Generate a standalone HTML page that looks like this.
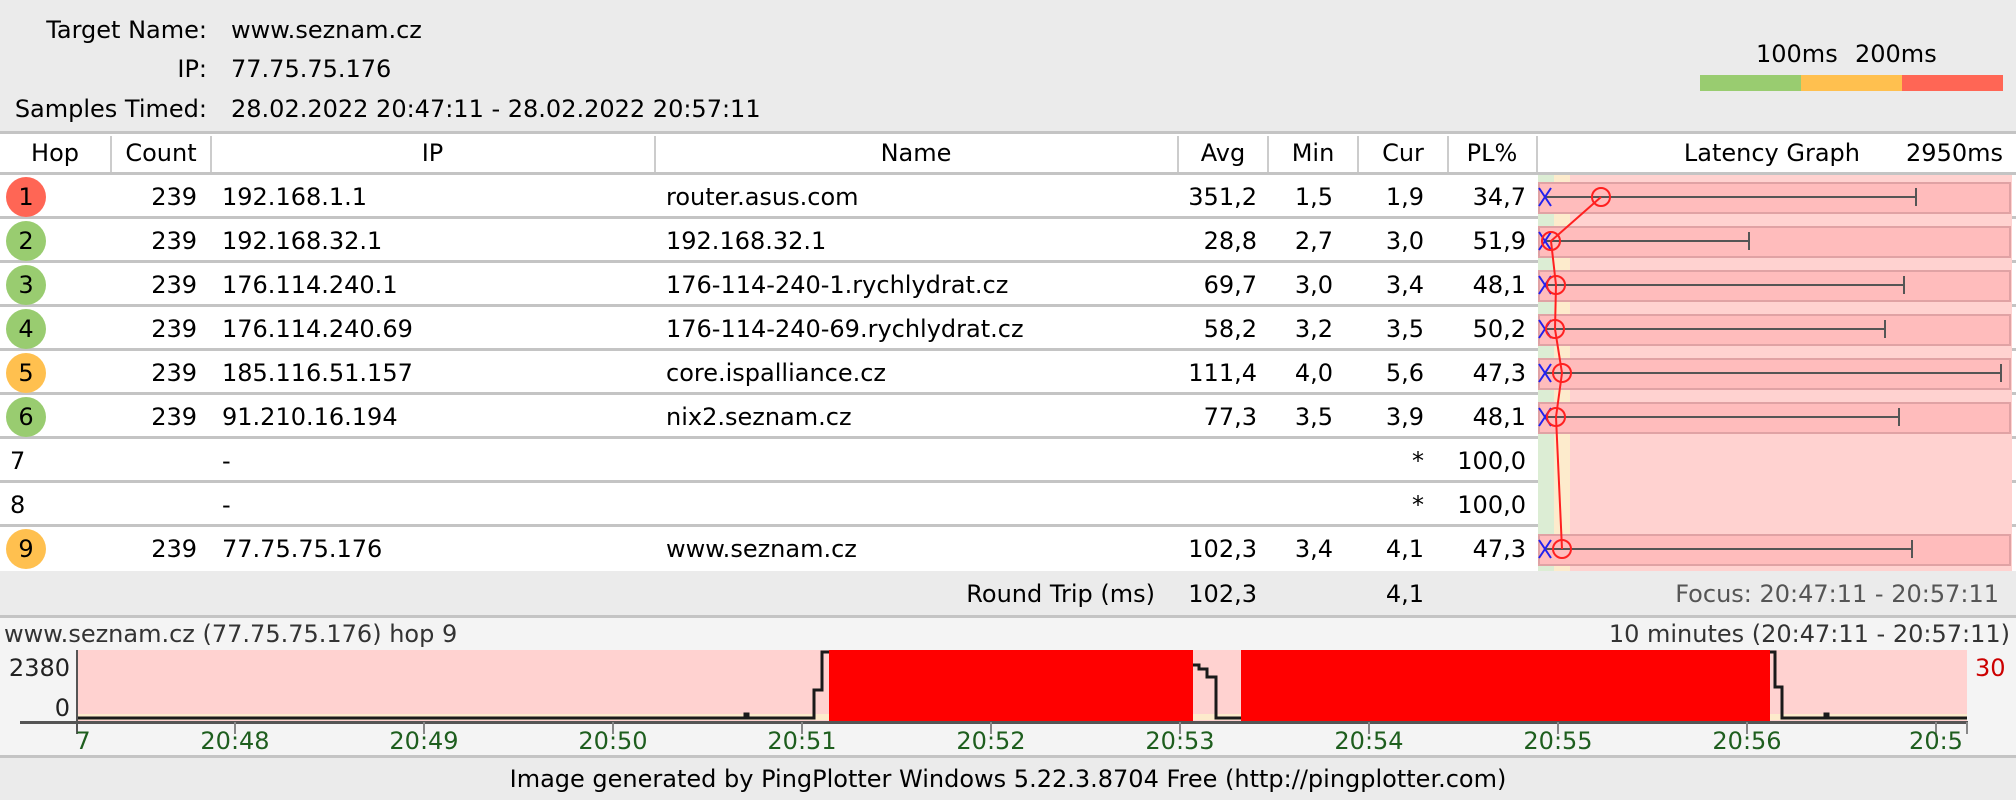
<!DOCTYPE html>
<html><head><meta charset="utf-8"><style>
*{margin:0;padding:0;box-sizing:border-box}
body{width:2016px;height:800px;overflow:hidden;background:#fff;font-family:"DejaVu Sans",sans-serif;font-size:24px;color:#000;position:relative}
.a{position:absolute;white-space:nowrap;line-height:30px}
.r{text-align:right}
.c{text-align:center}
</style></head><body>
<div style="position:absolute;left:0;top:0;width:2016px;height:132px;background:#ebebeb"></div>
<div class="a r" style="right:1809px;top:15px">Target Name:</div>
<div class="a" style="left:231px;top:15px">www.seznam.cz</div>
<div class="a r" style="right:1809px;top:54px">IP:</div>
<div class="a" style="left:231px;top:54px">77.75.75.176</div>
<div class="a r" style="right:1809px;top:94px">Samples Timed:</div>
<div class="a" style="left:231px;top:94px">28.02.2022 20:47:11 - 28.02.2022 20:57:11</div>
<div class="a" style="left:1756px;top:39px">100ms</div>
<div class="a" style="left:1855px;top:39px">200ms</div>
<div style="position:absolute;left:1700px;top:75px;width:101px;height:16px;background:#99cc70"></div>
<div style="position:absolute;left:1801px;top:75px;width:101px;height:16px;background:#ffc04f"></div>
<div style="position:absolute;left:1902px;top:75px;width:101px;height:16px;background:#ff6655"></div>
<div style="position:absolute;left:0;top:131px;width:2016px;height:3px;background:#c4c4c4"></div>
<div class="a c" style="left:0;width:110px;top:138px">Hop</div>
<div class="a c" style="left:111px;width:100px;top:138px">Count</div>
<div class="a c" style="left:211px;width:443px;top:138px">IP</div>
<div class="a c" style="left:654px;width:524px;top:138px">Name</div>
<div class="a c" style="left:1178px;width:90px;top:138px">Avg</div>
<div class="a c" style="left:1268px;width:90px;top:138px">Min</div>
<div class="a c" style="left:1358px;width:90px;top:138px">Cur</div>
<div class="a c" style="left:1448px;width:88px;top:138px">PL%</div>
<div class="a r" style="right:156px;top:138px">Latency Graph</div>
<div class="a r" style="right:13px;top:138px">2950ms</div>
<div style="position:absolute;left:110px;top:136px;width:2px;height:36px;background:#ccc"></div>
<div style="position:absolute;left:210px;top:136px;width:2px;height:36px;background:#ccc"></div>
<div style="position:absolute;left:654px;top:136px;width:2px;height:36px;background:#ccc"></div>
<div style="position:absolute;left:1177px;top:136px;width:2px;height:36px;background:#ccc"></div>
<div style="position:absolute;left:1267px;top:136px;width:2px;height:36px;background:#ccc"></div>
<div style="position:absolute;left:1357px;top:136px;width:2px;height:36px;background:#ccc"></div>
<div style="position:absolute;left:1447px;top:136px;width:2px;height:36px;background:#ccc"></div>
<div style="position:absolute;left:1536px;top:136px;width:2px;height:36px;background:#ccc"></div>

<svg style="position:absolute;left:0;top:0" width="2016" height="800">
<rect x="1538" y="174" width="16" height="398" fill="#dcedd4"/>
<rect x="1554" y="174" width="16" height="398" fill="#fdebcc"/>
<rect x="1570" y="174" width="442" height="398" fill="#ffd2d0"/>
<g fill="#ffbcbc" stroke="#e0a2a4" stroke-width="2">
<rect x="1539" y="183" width="471" height="30"/>
<rect x="1539" y="227" width="471" height="30"/>
<rect x="1539" y="271" width="471" height="30"/>
<rect x="1539" y="315" width="471" height="30"/>
<rect x="1539" y="359" width="471" height="30"/>
<rect x="1539" y="403" width="471" height="30"/>
<rect x="1539" y="535" width="471" height="30"/>
</g>
<g stroke="#555" stroke-width="2">
<line x1="1545" y1="197" x2="1916" y2="197"/><line x1="1916" y1="188" x2="1916" y2="206"/>
<line x1="1545" y1="241" x2="1749" y2="241"/><line x1="1749" y1="232" x2="1749" y2="250"/>
<line x1="1545" y1="285" x2="1904" y2="285"/><line x1="1904" y1="276" x2="1904" y2="294"/>
<line x1="1545" y1="329" x2="1885" y2="329"/><line x1="1885" y1="320" x2="1885" y2="338"/>
<line x1="1545" y1="373" x2="2001" y2="373"/><line x1="2001" y1="364" x2="2001" y2="382"/>
<line x1="1545" y1="417" x2="1899" y2="417"/><line x1="1899" y1="408" x2="1899" y2="426"/>
<line x1="1545" y1="549" x2="1912" y2="549"/><line x1="1912" y1="540" x2="1912" y2="558"/>
</g>
<g stroke="#2222ee" stroke-width="2">
<path d="M1539 188l12 18M1551 188l-12 18 M1539 232l12 18M1551 232l-12 18 M1539 276l12 18M1551 276l-12 18 M1539 320l12 18M1551 320l-12 18 M1539 364l12 18M1551 364l-12 18 M1539 408l12 18M1551 408l-12 18 M1539 540l12 18M1551 540l-12 18"/>
</g>
<polyline points="1601,197 1551,241 1556,285 1555,329 1562,373 1556,417 1562,549" fill="none" stroke="#ff2020" stroke-width="2"/>
<g fill="none" stroke="#ff2020" stroke-width="2">
<circle cx="1601" cy="197" r="9"/><circle cx="1551" cy="241" r="9"/><circle cx="1556" cy="285" r="9"/><circle cx="1555" cy="329" r="9"/><circle cx="1562" cy="373" r="9"/><circle cx="1556" cy="417" r="9"/><circle cx="1562" cy="549" r="9"/>
</g>
<g fill="#c4c4c4">
<rect x="0" y="172" width="2016" height="3"/>
<rect x="0" y="216" width="1538" height="3"/><rect x="2012" y="216" width="4" height="3"/>
<rect x="0" y="260" width="1538" height="3"/><rect x="2012" y="260" width="4" height="3"/>
<rect x="0" y="304" width="1538" height="3"/><rect x="2012" y="304" width="4" height="3"/>
<rect x="0" y="348" width="1538" height="3"/><rect x="2012" y="348" width="4" height="3"/>
<rect x="0" y="392" width="1538" height="3"/><rect x="2012" y="392" width="4" height="3"/>
<rect x="0" y="436" width="1538" height="3"/><rect x="2012" y="436" width="4" height="3"/>
<rect x="0" y="480" width="1538" height="3"/><rect x="2012" y="480" width="4" height="3"/>
<rect x="0" y="524" width="1538" height="3"/><rect x="2012" y="524" width="4" height="3"/>
</g>
<circle cx="26" cy="197" r="20" fill="#ff6655"/>
<circle cx="26" cy="241" r="20" fill="#99cc70"/>
<circle cx="26" cy="285" r="20" fill="#99cc70"/>
<circle cx="26" cy="329" r="20" fill="#99cc70"/>
<circle cx="26" cy="373" r="20" fill="#ffc04f"/>
<circle cx="26" cy="417" r="20" fill="#99cc70"/>
<circle cx="26" cy="549" r="20" fill="#ffc04f"/>
</svg>

<div class="a c" style="left:0;width:52px;top:182px">1</div>
<div class="a c" style="left:0;width:52px;top:226px">2</div>
<div class="a c" style="left:0;width:52px;top:270px">3</div>
<div class="a c" style="left:0;width:52px;top:314px">4</div>
<div class="a c" style="left:0;width:52px;top:358px">5</div>
<div class="a c" style="left:0;width:52px;top:402px">6</div>
<div class="a" style="left:10px;top:446px">7</div>
<div class="a" style="left:10px;top:490px">8</div>
<div class="a c" style="left:0;width:52px;top:534px">9</div>

<div class="a r" style="right:1819px;top:182px">239</div>
<div class="a r" style="right:1819px;top:226px">239</div>
<div class="a r" style="right:1819px;top:270px">239</div>
<div class="a r" style="right:1819px;top:314px">239</div>
<div class="a r" style="right:1819px;top:358px">239</div>
<div class="a r" style="right:1819px;top:402px">239</div>
<div class="a r" style="right:1819px;top:534px">239</div>

<div class="a" style="left:222px;top:182px">192.168.1.1</div>
<div class="a" style="left:222px;top:226px">192.168.32.1</div>
<div class="a" style="left:222px;top:270px">176.114.240.1</div>
<div class="a" style="left:222px;top:314px">176.114.240.69</div>
<div class="a" style="left:222px;top:358px">185.116.51.157</div>
<div class="a" style="left:222px;top:402px">91.210.16.194</div>
<div class="a" style="left:222px;top:446px">-</div>
<div class="a" style="left:222px;top:490px">-</div>
<div class="a" style="left:222px;top:534px">77.75.75.176</div>

<div class="a" style="left:666px;top:182px">router.asus.com</div>
<div class="a" style="left:666px;top:226px">192.168.32.1</div>
<div class="a" style="left:666px;top:270px">176-114-240-1.rychlydrat.cz</div>
<div class="a" style="left:666px;top:314px">176-114-240-69.rychlydrat.cz</div>
<div class="a" style="left:666px;top:358px">core.ispalliance.cz</div>
<div class="a" style="left:666px;top:402px">nix2.seznam.cz</div>
<div class="a" style="left:666px;top:534px">www.seznam.cz</div>

<div class="a r" style="right:759px;top:182px">351,2</div>
<div class="a r" style="right:759px;top:226px">28,8</div>
<div class="a r" style="right:759px;top:270px">69,7</div>
<div class="a r" style="right:759px;top:314px">58,2</div>
<div class="a r" style="right:759px;top:358px">111,4</div>
<div class="a r" style="right:759px;top:402px">77,3</div>
<div class="a r" style="right:759px;top:534px">102,3</div>

<div class="a r" style="right:683px;top:182px">1,5</div>
<div class="a r" style="right:683px;top:226px">2,7</div>
<div class="a r" style="right:683px;top:270px">3,0</div>
<div class="a r" style="right:683px;top:314px">3,2</div>
<div class="a r" style="right:683px;top:358px">4,0</div>
<div class="a r" style="right:683px;top:402px">3,5</div>
<div class="a r" style="right:683px;top:534px">3,4</div>

<div class="a r" style="right:592px;top:182px">1,9</div>
<div class="a r" style="right:592px;top:226px">3,0</div>
<div class="a r" style="right:592px;top:270px">3,4</div>
<div class="a r" style="right:592px;top:314px">3,5</div>
<div class="a r" style="right:592px;top:358px">5,6</div>
<div class="a r" style="right:592px;top:402px">3,9</div>
<div class="a r" style="right:592px;top:446px">*</div>
<div class="a r" style="right:592px;top:490px">*</div>
<div class="a r" style="right:592px;top:534px">4,1</div>

<div class="a r" style="right:490px;top:182px">34,7</div>
<div class="a r" style="right:490px;top:226px">51,9</div>
<div class="a r" style="right:490px;top:270px">48,1</div>
<div class="a r" style="right:490px;top:314px">50,2</div>
<div class="a r" style="right:490px;top:358px">47,3</div>
<div class="a r" style="right:490px;top:402px">48,1</div>
<div class="a r" style="right:490px;top:446px">100,0</div>
<div class="a r" style="right:490px;top:490px">100,0</div>
<div class="a r" style="right:490px;top:534px">47,3</div>

<div style="position:absolute;left:0;top:571px;width:2016px;height:46px;background:#ebebeb"></div>
<div class="a r" style="right:861px;top:579px">Round Trip (ms)</div>
<div class="a r" style="right:759px;top:579px">102,3</div>
<div class="a r" style="right:592px;top:579px">4,1</div>
<div class="a r" style="right:17px;top:579px;color:#555">Focus: 20:47:11 - 20:57:11</div>
<div style="position:absolute;left:0;top:615px;width:2016px;height:3px;background:#c4c4c4"></div>

<div style="position:absolute;left:0;top:618px;width:2016px;height:138px;background:#f4f4f4"></div>
<div class="a" style="left:4px;top:619px;color:#333">www.seznam.cz (77.75.75.176) hop 9</div>
<div class="a r" style="right:6px;top:619px;color:#333">10 minutes (20:47:11 - 20:57:11)</div>
<svg style="position:absolute;left:0;top:0" width="2016" height="800">
<rect x="77" y="650" width="1890" height="72" fill="#ffd2d0"/>
<rect x="77" y="714" width="1890" height="6" fill="#fdebcc"/>
<rect x="829" y="650" width="364" height="72" fill="#ff0000"/>
<rect x="1241" y="650" width="529" height="72" fill="#ff0000"/>
<polyline points="77,718 745,718 745,714 748,714 748,718 814,718 814,690 822,690 822,652 829,652" fill="none" stroke="#1a1a1a" stroke-width="3"/>
<polyline points="1193,665 1199,665 1199,669 1207,669 1207,677 1216,677 1216,718 1241,718" fill="none" stroke="#1a1a1a" stroke-width="3"/>
<polyline points="1770,652 1775,652 1775,687 1782,687 1782,718 1825,718 1825,714 1828,714 1828,718 1967,718" fill="none" stroke="#1a1a1a" stroke-width="3"/>
<rect x="20" y="721" width="1948" height="3" fill="#555"/>
<rect x="76" y="650" width="2" height="84" fill="#555"/>
<g fill="#888">
<rect x="234" y="722" width="2" height="12"/><rect x="423" y="722" width="2" height="12"/><rect x="612" y="722" width="2" height="12"/><rect x="801" y="722" width="2" height="12"/><rect x="990" y="722" width="2" height="12"/><rect x="1179" y="722" width="2" height="12"/><rect x="1368" y="722" width="2" height="12"/><rect x="1557" y="722" width="2" height="12"/><rect x="1746" y="722" width="2" height="12"/><rect x="1935" y="722" width="2" height="12"/><rect x="1966" y="722" width="2" height="12"/>
</g>
<g font-family="DejaVu Sans, sans-serif" font-size="24" fill="#1e5e1e" text-anchor="middle">
<text x="83" y="749">7</text>
<text x="235" y="749">20:48</text><text x="424" y="749">20:49</text><text x="613" y="749">20:50</text><text x="802" y="749">20:51</text><text x="991" y="749">20:52</text><text x="1180" y="749">20:53</text><text x="1369" y="749">20:54</text><text x="1558" y="749">20:55</text><text x="1747" y="749">20:56</text><text x="1936" y="749">20:5</text>
</g>
<g font-family="DejaVu Sans, sans-serif" font-size="24" fill="#222" text-anchor="end">
<text x="70" y="676">2380</text><text x="70" y="716">0</text>
</g>
<text x="1975" y="676" font-family="DejaVu Sans, sans-serif" font-size="24" fill="#cc0000">30</text>
</svg>
<div style="position:absolute;left:0;top:755px;width:2016px;height:3px;background:#c4c4c4"></div>
<div style="position:absolute;left:0;top:758px;width:2016px;height:42px;background:#ebebeb"></div>
<div class="a c" style="left:0;width:2016px;top:764px">Image generated by PingPlotter Windows 5.22.3.8704 Free (http://pingplotter.com)</div>
</body></html>
